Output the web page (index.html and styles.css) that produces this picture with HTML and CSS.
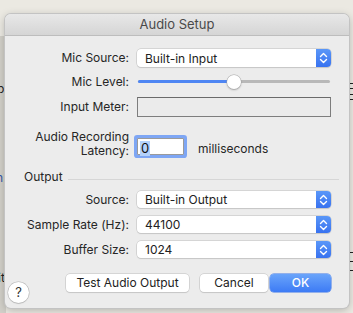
FILE: index.html
```html
<!DOCTYPE html>
<html>
<head>
<meta charset="utf-8">
<link rel="stylesheet" href="styles.css">
</head>
<body>
<div class="desk">
  <div class="under-left">
    <span class="frag f1">p</span>
    <span class="frag f2 blue">n</span>
    <span class="frag f3">it</span>
  </div>
  <div class="under-right">
    <i class="tick t1"></i><i class="tick t2"></i><i class="tick t3"></i><i class="tick t4"></i>
    <i class="tick t5"></i><i class="tick t6"></i><i class="tick t7"></i>
  </div>
  <div class="dialog">
    <div class="titlebar">Audio Setup</div>
    <div class="body">
      <div class="row r-mic">
        <span class="label">Mic Source:</span>
        <div class="popup"><span class="ptext">Built-in Input</span><span class="stepper"><svg width="9" height="12" viewBox="0 0 9 12"><path d="M1.5 4.5 L4.5 1.5 L7.5 4.5 M1.5 7.5 L4.5 10.5 L7.5 7.5" fill="none" stroke="#fff" stroke-width="1.4" stroke-linecap="round" stroke-linejoin="round"/></svg></span></div>
      </div>
      <div class="row r-level">
        <span class="label">Mic Level:</span>
        <div class="slider"><div class="fill"></div><div class="knob"></div></div>
      </div>
      <div class="row r-meter">
        <span class="label">Input Meter:</span>
        <div class="meter"></div>
      </div>
      <div class="row r-lat">
        <span class="label two">Audio Recording<br>Latency:</span>
        <div class="latctl">
          <div class="field"><span class="sel">0</span></div>
          <span class="unit">milliseconds</span>
        </div>
      </div>
      <div class="section">
        <span class="stitle">Output</span>
        <span class="sline"></span>
      </div>
      <div class="row r-src">
        <span class="label">Source:</span>
        <div class="popup"><span class="ptext">Built-in Output</span><span class="stepper"><svg width="9" height="12" viewBox="0 0 9 12"><path d="M1.5 4.5 L4.5 1.5 L7.5 4.5 M1.5 7.5 L4.5 10.5 L7.5 7.5" fill="none" stroke="#fff" stroke-width="1.4" stroke-linecap="round" stroke-linejoin="round"/></svg></span></div>
      </div>
      <div class="row r-rate">
        <span class="label">Sample Rate (Hz):</span>
        <div class="popup"><span class="ptext">44100</span><span class="stepper"><svg width="9" height="12" viewBox="0 0 9 12"><path d="M1.5 4.5 L4.5 1.5 L7.5 4.5 M1.5 7.5 L4.5 10.5 L7.5 7.5" fill="none" stroke="#fff" stroke-width="1.4" stroke-linecap="round" stroke-linejoin="round"/></svg></span></div>
      </div>
      <div class="row r-buf">
        <span class="label">Buffer Size:</span>
        <div class="popup"><span class="ptext">1024</span><span class="stepper"><svg width="9" height="12" viewBox="0 0 9 12"><path d="M1.5 4.5 L4.5 1.5 L7.5 4.5 M1.5 7.5 L4.5 10.5 L7.5 7.5" fill="none" stroke="#fff" stroke-width="1.4" stroke-linecap="round" stroke-linejoin="round"/></svg></span></div>
      </div>
      <div class="footer">
        <div class="help">?</div>
        <div class="btn b-test">Test Audio Output</div>
        <div class="btn b-cancel">Cancel</div>
        <div class="btn b-ok">OK</div>
      </div>
    </div>
  </div>
</div>
</body>
</html>
```
FILE: styles.css
```css
* { box-sizing: border-box; }
html, body { margin: 0; padding: 0; }
body {
  width: 353px;
  height: 313px;
  overflow: hidden;
  font-family: Inter, "Noto Sans", sans-serif;
  color: #262626;
}
.desk {
  position: relative;
  width: 353px;
  height: 313px;
  background: #ebe9e2;
  padding: 14px 0 0 5px;
}
.under-left {
  position: absolute;
  left: 0; top: 36px;
  width: 6px; height: 277px;
  background: #d2d0c9;
  overflow: hidden;
}
.frag { position: absolute; font-size: 12px; color: #222; line-height: 12px; }
.f1 { left: -3px; top: 47px; }
.f2 { left: -4px; top: 136px; color: #3457a8; }
.f3 { left: -2px; top: 236px; }
.under-right {
  position: absolute;
  right: 0; top: 30px;
  width: 5px; height: 283px;
}
.tick { position: absolute; right: 0; width: 4px; height: 1px; background: #222; }
.t1 { top: 53px; } .t2 { top: 58px; } .t3 { top: 64px; } .t4 { top: 69px; }
.t5 { top: 222px; } .t6 { top: 231px; } .t7 { top: 240px; }

.dialog {
  position: relative;
  width: 344px;
  height: 294px;
  border-radius: 6px;
  background: #ececec;
  box-shadow: 0 0 0 1px #c3c3c3, 0 2px 8px rgba(0,0,0,0.25);
  overflow: hidden;
}
.titlebar {
  height: 22px;
  background: linear-gradient(#e8e8e8, #d5d5d5);
  border-bottom: 1px solid #bdbdbd;
  text-align: center;
  font-size: 13px;
  line-height: 21px;
  color: #4a4a4a;
}
.body {
  display: flex;
  flex-direction: column;
}
.row {
  display: grid;
  grid-template-columns: 124px 194px;
  column-gap: 8px;
  align-items: center;
}
.label {
  text-align: right;
  font-size: 12px;
  line-height: 14px;
  white-space: nowrap;
}
.popup {
  height: 18px;
  background: #fff;
  border-radius: 4px;
  box-shadow: 0 0 0 0.5px #bdbdbd, 0 1px 1px rgba(0,0,0,0.12);
  display: flex;
  align-items: center;
  font-size: 12px;
  color: #222;
}
.ptext { flex: 1; padding-left: 8px; }
.stepper {
  width: 15px;
  align-self: stretch;
  background: linear-gradient(#5a97f8, #3872f0);
  border-radius: 0 4px 4px 0;
  display: flex;
  align-items: center;
  justify-content: center;
}
.r-mic { margin-top: 13px; }
.r-level { margin-top: 8px; height: 14px; }
.slider {
  position: relative;
  height: 14px;
  margin-left: 1px;
  margin-right: 1px;
}
.slider::before {
  content: "";
  position: absolute;
  left: 0; right: 0; top: 5px;
  height: 3px;
  border-radius: 2px;
  background: #b8b8b8;
}
.fill {
  position: absolute;
  left: 0; top: 5px;
  width: 96px; height: 3px;
  border-radius: 2px;
  background: #4f86f3;
}
.knob {
  position: absolute;
  left: 89px; top: 0px;
  width: 14px; height: 14px;
  border-radius: 50%;
  background: #fff;
  box-shadow: 0 0 0 0.5px #a9a9a9, 0 1px 2px rgba(0,0,0,0.3);
}
.r-meter { margin-top: 8px; }
.meter {
  height: 20px;
  border: 1px solid #7d7d7d;
  border-top-color: #6a6a6a;
  background: #ebebeb;
}
.r-lat { margin-top: 13px; align-items: end; }
.label.two { line-height: 14px; }
.latctl {
  display: flex;
  align-items: center;
  margin-left: -3px;
}
.field {
  width: 53px;
  height: 22px;
  background: #fff;
  border: 1px solid #9a9a9a;
  box-shadow: 0 0 0 3px #7ea6f4;
  border-radius: 1px;
  margin: 0 0 0 3px;
  font-size: 13px;
  line-height: 18px;
  padding-left: 2px;
  width: 47px;
  height: 16px;
  margin-bottom: 3px;
}
.field { height: 17px; }
.sel {
  background: #b4d2fb;
  color: #111;
  display: inline-block;
  line-height: 15px;
  padding: 0 1px;
}
.unit {
  margin-left: 14px;
  font-size: 12px;
}
.section {
  margin-top: 12px;
  display: flex;
  align-items: center;
  padding-left: 19px;
  padding-right: 10px;
  height: 14px;
}
.stitle { font-size: 12px; line-height: 14px; }
.sline {
  flex: 1;
  height: 1px;
  background: #d6d6d6;
  margin-left: 5px;
  margin-top: 5px;
}
.r-src { margin-top: 7px; }
.r-src .popup, .r-rate .popup, .r-buf .popup { height: 17px; }
.r-rate { margin-top: 8px; }
.r-buf { margin-top: 8px; }
.footer {
  margin-top: 16px;
  display: flex;
  align-items: flex-start;
  padding-left: 3px;
}
.help {
  width: 21px; height: 21px;
  border-radius: 50%;
  background: #fff;
  box-shadow: 0 0 0 0.5px #b5b5b5, 0 1px 1px rgba(0,0,0,0.15);
  margin-top: 8px;
  text-align: center;
  font-size: 13px;
  line-height: 21px;
  color: #333;
}
.btn {
  height: 18px;
  border-radius: 4px;
  background: #fff;
  box-shadow: 0 0 0 0.5px #bdbdbd, 0 1px 1px rgba(0,0,0,0.12);
  font-size: 12px;
  line-height: 18px;
  text-align: center;
  color: #222;
}
.b-test { width: 123px; margin-left: 37px; }
.b-cancel { width: 68px; margin-left: 11px; }
.b-ok {
  width: 61px; margin-left: 2px;
  background: linear-gradient(#6aa4fa, #3d7bf5);
  color: #fff;
  font-weight: 500;
  box-shadow: 0 0 0 0.5px #3b74e8;
}
```
